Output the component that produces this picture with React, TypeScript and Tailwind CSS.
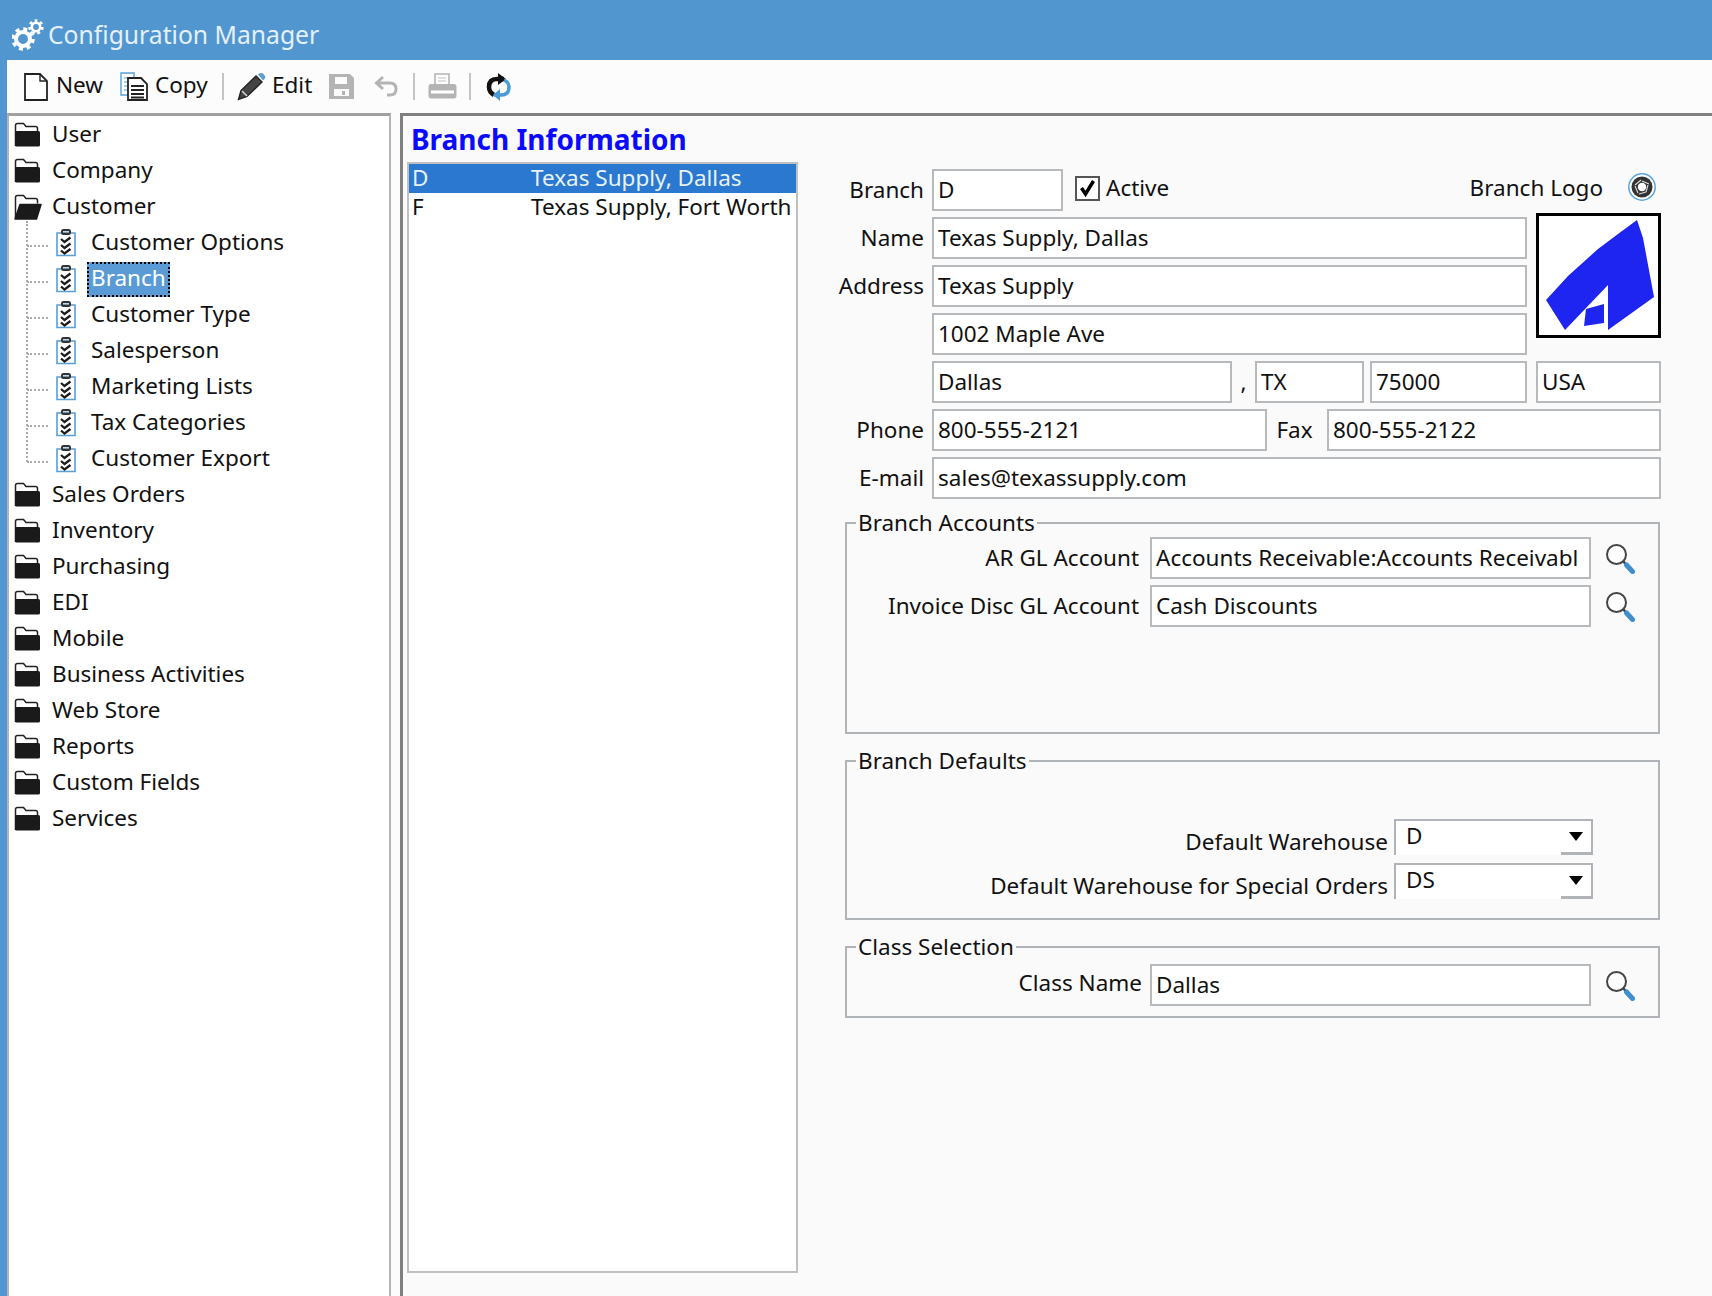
import type { ReactNode } from "react";

function GearIcon() {
  return (
    <svg width="32" height="34" viewBox="0 0 32 34" fill="none">
      <circle cx="11" cy="21" r="7" stroke="#fff" strokeWidth="4" />
      <circle cx="11" cy="21" r="10" stroke="#fff" strokeWidth="3.5" strokeDasharray="4 3.85" />
      <circle cx="24" cy="9" r="4.2" stroke="#fff" strokeWidth="2.6" />
      <circle cx="24" cy="9" r="6.4" stroke="#fff" strokeWidth="2.6" strokeDasharray="2.8 2.8" />
    </svg>
  );
}

function FolderIcon({ open }: { open?: boolean }) {
  return (
    <svg width="28" height="26" viewBox="0 0 28 26" className="shrink-0">
      <path d="M1.500 24V3.500q0-2 2-2h6l2.500 3h9.500q2 0 2 2v3" fill="#fff" stroke="#222" strokeWidth="1.500" />
      {open ? (
        <path d="M1 25L6 10.500h21L22.500 25z" fill="#1a1a1a" stroke="#1a1a1a" strokeWidth="1.500" strokeLinejoin="round" />
      ) : (
        <rect x="1" y="9" width="25" height="15.500" rx="1.500" fill="#1a1a1a" />
      )}
    </svg>
  );
}

function ChecklistIcon() {
  return (
    <svg width="20" height="29" viewBox="0 0 20 29" fill="none" className="-mt-[2px] shrink-0">
      <path d="M5 5H1v22.500h18V5h-4" stroke="#5a9fd4" strokeWidth="1.600" />
      <rect x="5" y="1" width="10" height="6" rx="2.500" fill="#333" />
      <rect x="7" y="3" width="6" height="1.600" fill="#bcd8ef" />
      <path d="M5 11l3.500 3 6-4.500M5 17l3.500 3 6-4.500M5 22.500l3.500 3 6-4.500" stroke="#1d1d1d" strokeWidth="2.300" />
    </svg>
  );
}

function NewIcon() {
  return (
    <svg width="24" height="28" viewBox="0 0 24 28" fill="none" className="shrink-0">
      <path d="M1 1h15l7 7v19H1z" fill="#fff" stroke="#222" strokeWidth="1.800" />
      <path d="M16 1v7h7" stroke="#222" strokeWidth="1.400" />
    </svg>
  );
}

function CopyIcon() {
  return (
    <svg width="28" height="29" viewBox="0 0 28 29" fill="none" className="shrink-0">
      <path d="M1 1h13v22H1z" fill="#fff" stroke="#5a9fd4" strokeWidth="1.400" />
      <path d="M4 6h7M4 10h7M4 14h7M4 18h7" stroke="#5a9fd4" strokeWidth="1.200" />
      <path d="M8 6h13l6 6v16H8z" fill="#fff" stroke="#222" strokeWidth="1.800" />
      <path d="M11 14h13M11 18h13M11 22h13M11 25.500h13" stroke="#222" strokeWidth="1.800" />
    </svg>
  );
}

function PencilIcon() {
  return (
    <svg width="30" height="29" viewBox="0 0 30 29" fill="none" className="shrink-0">
      <path d="M1.500 27.500l2.500-9L19 4l6 6-15 14.500z" fill="#444" stroke="#222" strokeWidth="1.400" />
      <path d="M5 19l5 5" stroke="#ddd" strokeWidth="1.400" />
      <path d="M21 2.500l2.500-1.500q1.500-.5 3 1l1.500 2q.8 1.500-.5 3L26 8.500z" fill="#5a9fd4" />
    </svg>
  );
}

function SaveIcon() {
  return (
    <svg width="25" height="25" viewBox="0 0 25 25" className="shrink-0">
      <path fillRule="evenodd" d="M0 0h21l4 4v21H0zM6 3v7h12V3zM5 15v7h15v-7z" fill="#b4b4b4" />
      <rect x="13" y="17" width="3" height="4" fill="#b4b4b4" />
    </svg>
  );
}

function UndoIcon() {
  return (
    <svg width="24" height="23" viewBox="0 0 24 23" fill="none" className="shrink-0">
      <path d="M9 2L2.500 8l6.500 6" stroke="#b4b4b4" strokeWidth="3" />
      <path d="M3 8h13q6 0 6 6t-6 6h-3" stroke="#b4b4b4" strokeWidth="3" />
    </svg>
  );
}

function PrinterIcon() {
  return (
    <svg width="29" height="28" viewBox="0 0 29 28" fill="none" className="shrink-0">
      <path d="M7 12V1h14v11" stroke="#b4b4b4" strokeWidth="1.600" />
      <path d="M10 5h8M10 8h8" stroke="#c4c4c4" strokeWidth="1.200" />
      <path d="M3 11h23q2.500 0 2.500 3v8.500q0 3-2.500 3H3q-2.500 0-2.500-3V14q0-3 2.500-3z" fill="#b4b4b4" />
      <rect x="3" y="17.500" width="23" height="3" fill="#fff" />
    </svg>
  );
}

function RefreshIcon() {
  return (
    <svg width="26" height="28" viewBox="0 0 26 28" fill="none" className="shrink-0">
      <path d="M18 6H11Q3 6 3 14q0 5 5 8" stroke="#111" strokeWidth="4.500" />
      <path d="M12 0l8 6-8 6z" fill="#111" />
      <path d="M8 22h7q8 0 8-8 0-5-5-7" stroke="#4a9ad8" strokeWidth="3.500" />
      <path d="M14 16l-7 6 7 6z" fill="#4a9ad8" />
    </svg>
  );
}

function ApertureIcon() {
  return (
    <svg width="28" height="28" viewBox="0 0 28 28" fill="none" className="shrink-0">
      <circle cx="14" cy="14" r="13.200" fill="#fff" stroke="#5aa6dc" strokeWidth="1.500" />
      <circle cx="14" cy="14" r="10.500" fill="#333" />
      <circle cx="14" cy="14" r="4.200" fill="#fff" />
      <path d="M14 8l7 3M20 12l-2 7M18 19l-7 2M10 20l-3-7M7 12l6-5" stroke="#ddd" strokeWidth="1.100" />
    </svg>
  );
}

function SearchIcon() {
  return (
    <svg width="31" height="31" viewBox="0 0 31 31" fill="none" className="shrink-0">
      <circle cx="11.500" cy="11.500" r="9.500" fill="#fff" stroke="#444" strokeWidth="2" />
      <path d="M18 18l3.500 4" stroke="#444" strokeWidth="2.500" />
      <path d="M21.500 22l6 6.500" stroke="#3f8fd0" strokeWidth="5" strokeLinecap="round" />
    </svg>
  );
}

function BranchLogo() {
  return (
    <svg viewBox="0 0 119 119" className="h-full w-full">
      <path d="M98 4l3 9 3 9 11 59-46 33V69L26 114 7 84l22-24 30-27 20-15z" fill="#1f25f0" />
      <path d="M47 93l18-5v19l-20 3z" fill="#1f25f0" />
    </svg>
  );
}

function Input({ value, className = "flex-1" }: { value: string; className?: string }) {
  return (
    <div className={`flex h-[42px] items-center overflow-hidden whitespace-nowrap border-2 border-[#b6babd] bg-white pb-[1px] pl-[4px] ${className}`}>
      {value}
    </div>
  );
}

function Combo({ value }: { value: string }) {
  return (
    <div className="flex h-[36px] w-[199px] items-start justify-between border-l-2 border-t-2 border-[#b0b4b8] bg-white">
      <span className="pl-[10px] leading-[30px]">{value}</span>
      <div className="flex h-[34px] w-[32px] items-start justify-center border-b-[3px] border-r-2 border-[#b0b4b8] pt-[11px]">
        <div className="h-0 w-0 border-x-[7px] border-t-[9px] border-x-transparent border-t-black" />
      </div>
    </div>
  );
}

function Group({ title, className, children }: { title: string; className: string; children: ReactNode }) {
  return (
    <fieldset className={`ml-[16px] w-[815px] border-2 border-[#b0b4b8] ${className}`}>
      <legend className="ml-[9px] px-[2px] leading-[24px]">{title}</legend>
      {children}
    </fieldset>
  );
}

const folders1 = ["User", "Company"];
const children = ["Customer Options", "Branch", "Customer Type", "Salesperson", "Marketing Lists", "Tax Categories", "Customer Export"];
const folders2 = ["Sales Orders", "Inventory", "Purchasing", "EDI", "Mobile", "Business Activities", "Web Store", "Reports", "Custom Fields", "Services"];

function Folder({ label, open }: { label: string; open?: boolean }) {
  return (
    <div className="flex h-[36px] items-center gap-[10px] pl-[5px]">
      <FolderIcon open={open} />
      <span className="pb-[3px]">{label}</span>
    </div>
  );
}

function Tree() {
  return (
    <div className="h-full w-[384px] shrink-0 border-x-2 border-t-[3px] border-x-[#b4b4b4] border-t-[#a0a0a0] bg-white pt-[1px]">
      {folders1.map((f) => (
        <Folder key={f} label={f} />
      ))}
      <Folder label="Customer" open />
      <div className="relative">
        {/* dotted tree guide */}
        <div className="absolute left-[17px] top-[-4px] h-[241px] border-l-2 border-dotted border-[#aaa]" />
        {children.map((c) => (
          <div key={c} className="flex h-[36px] items-center pl-[47px]">
            <div className="absolute left-[18px] mt-[6px] w-[21px] border-t-2 border-dotted border-[#aaa]" />
            <ChecklistIcon />
            {c === "Branch" ? (
              <span className="ml-[11px] border-2 border-dotted border-black bg-[#5a9bd5] px-[2px] pb-[3px] leading-[28px] text-white">{c}</span>
            ) : (
              <span className="ml-[15px] pb-[3px]">{c}</span>
            )}
          </div>
        ))}
      </div>
      {folders2.map((f) => (
        <Folder key={f} label={f} />
      ))}
    </div>
  );
}

function Sep({ className }: { className: string }) {
  return <div className={`h-[27px] w-[2px] bg-[#c4c4c4] ${className}`} />;
}

function Toolbar() {
  return (
    <div className="flex h-[53px] shrink-0 items-center bg-[#fcfcfc] text-[#111]">
      <div className="ml-[17px] flex w-[96px] items-center gap-[8px]">
        <NewIcon />
        <span className="pb-[3px]">New</span>
      </div>
      <div className="flex w-[102px] items-center gap-[7px]">
        <CopyIcon />
        <span className="pb-[3px]">Copy</span>
      </div>
      <Sep className="" />
      <div className="ml-[13px] flex w-[92px] items-center gap-[5px]">
        <PencilIcon />
        <span className="pb-[3px]">Edit</span>
      </div>
      <SaveIcon />
      <div className="ml-[20px]">
        <UndoIcon />
      </div>
      <Sep className="ml-[15px]" />
      <div className="ml-[13px]">
        <PrinterIcon />
      </div>
      <Sep className="ml-[12px]" />
      <div className="ml-[15px]">
        <RefreshIcon />
      </div>
    </div>
  );
}

function FormTop() {
  return (
    <div className="flex flex-col gap-[6px]">
      <div className="flex h-[42px] items-center">
        <span className="w-[95px] pb-[1px] text-right">Branch</span>
        <Input value="D" className="ml-[8px] w-[131px]" />
        <div className="-mt-[4px] ml-[12px] flex h-[25px] w-[25px] items-center justify-center border-2 border-[#555] bg-white">
          <svg width="19" height="19" viewBox="0 0 19 19" fill="none">
            <path d="M3.500 9l4 6L15.500 2" stroke="#000" strokeWidth="3.500" />
          </svg>
        </div>
        <span className="ml-[6px] -mt-[5px]">Active</span>
        <span className="ml-auto mr-[25px] -mt-[5px]">Branch Logo</span>
        <div className="mr-[5px] -mt-[6px]">
          <ApertureIcon />
        </div>
      </div>
      <div className="flex">
        <div className="flex w-[698px] flex-col gap-[6px]">
          <div className="flex items-center">
            <span className="w-[95px] pb-[1px] text-right">Name</span>
            <Input value="Texas Supply, Dallas" className="ml-[8px] flex-1" />
          </div>
          <div className="flex items-center">
            <span className="w-[95px] pb-[1px] text-right">Address</span>
            <Input value="Texas Supply" className="ml-[8px] flex-1" />
          </div>
          <div className="flex items-center">
            <Input value="1002 Maple Ave" className="ml-[103px] flex-1" />
          </div>
        </div>
        <div className="-mt-[4px] ml-[9px] h-[125px] w-[125px] border-[3px] border-black bg-white">
          <BranchLogo />
        </div>
      </div>
      <div className="flex items-center">
        <Input value="Dallas" className="ml-[103px] w-[300px]" />
        <span className="w-[23px] text-center">,</span>
        <Input value="TX" className="w-[109px]" />
        <Input value="75000" className="ml-[6px] w-[157px]" />
        <Input value="USA" className="ml-[9px] w-[125px]" />
      </div>
      <div className="flex items-center">
        <span className="w-[95px] pb-[1px] text-right">Phone</span>
        <Input value="800-555-2121" className="ml-[8px] w-[335px]" />
        <span className="w-[60px] pb-[1px] pr-[5px] text-center">Fax</span>
        <Input value="800-555-2122" />
      </div>
      <div className="flex items-center">
        <span className="w-[95px] pb-[1px] text-right">E-mail</span>
        <Input value="sales@texassupply.com" className="ml-[8px] flex-1" />
      </div>
    </div>
  );
}

function LookupRow({ label, value, labelW = "w-[292px] pb-[1px]", gap = "ml-[11px]" }: { label: string; value: string; labelW?: string; gap?: string }) {
  return (
    <div className="flex items-center">
      <span className={`text-right ${labelW}`}>{label}</span>
      <Input value={value} className={`w-[441px] flex-none ${gap}`} />
      <div className="ml-[14px]">
        <SearchIcon />
      </div>
    </div>
  );
}

function BranchForm() {
  return (
    <div className="ml-[31px] w-[832px] pt-[53px]">
      <FormTop />
      <Group title="Branch Accounts" className="mt-[12px] h-[223px]">
        <div className="flex flex-col gap-[6px] pt-[2px]">
          <LookupRow label="AR GL Account" value="Accounts Receivable:Accounts Receivabl" />
          <LookupRow label="Invoice Disc GL Account" value="Cash Discounts" />
        </div>
      </Group>
      <Group title="Branch Defaults" className="mt-[15px] h-[171px]">
        <div className="flex flex-col gap-[8px] pt-[46px]">
          <div className="flex items-center">
            <span className="w-[541px] translate-y-[5px] text-right">Default Warehouse</span>
            <div className="ml-[6px]">
              <Combo value="D" />
            </div>
          </div>
          <div className="flex items-center">
            <span className="w-[541px] translate-y-[5px] text-right">Default Warehouse for Special Orders</span>
            <div className="ml-[6px]">
              <Combo value="DS" />
            </div>
          </div>
        </div>
      </Group>
      <Group title="Class Selection" className="mt-[15px] h-[83px]">
        <div className="pt-[5px]">
          <LookupRow label="Class Name" value="Dallas" labelW="w-[295px] pb-[5px]" gap="ml-[8px]" />
        </div>
      </Group>
    </div>
  );
}

export default function App() {
  return (
    <div className="flex h-[1296px] w-[1712px] flex-col overflow-hidden bg-[#5296d0] font-['Noto_Sans',sans-serif] text-[22.5px] leading-[30px] text-[#111]">
      <div className="flex h-[60px] shrink-0 items-center gap-[4px] pl-[12px] pt-[9px] text-[24.7px] text-[#e4f0fa]">
        <GearIcon />
        <span>Configuration Manager</span>
      </div>
      <div className="ml-[7px] flex min-h-0 flex-1 flex-col bg-[#fcfcfc]">
        <Toolbar />
        <div className="flex min-h-0 flex-1">
          <Tree />
          <div className="ml-[9px] flex flex-1 border-l-[3px] border-t-[3px] border-[#7f7f7f] bg-[#fafafa] pl-[4px]">
            <div className="flex w-[391px] shrink-0 flex-col">
              <h1 className="h-[46px] pl-[4px] pt-[7px] text-[28px] font-bold leading-[32px] text-[#0a0aff]">Branch Information</h1>
              <div className="flex h-[1111px] flex-col border-2 border-[#c0c0c0] bg-white">
                <div className="flex h-[29px] items-center bg-[#2b78d0] pb-[2px] pl-[3px] text-[#e8f2fb]">
                  <span className="w-[119px]">D</span>
                  <span>Texas Supply, Dallas</span>
                </div>
                <div className="flex h-[30px] items-center pb-[2px] pl-[3px]">
                  <span className="w-[119px]">F</span>
                  <span>Texas Supply, Fort Worth</span>
                </div>
              </div>
            </div>
            <BranchForm />
          </div>
        </div>
      </div>
    </div>
  );
}
